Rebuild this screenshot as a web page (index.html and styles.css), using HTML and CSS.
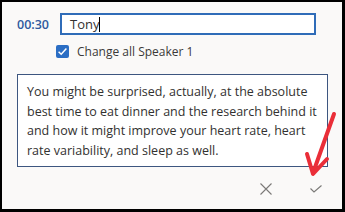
FILE: index.html
```html
<!DOCTYPE html>
<html>
<head>
<meta charset="utf-8">
<link rel="stylesheet" href="styles.css">
</head>
<body>
<div class="frame">
  <div class="row-name">
    <span class="time">00:30</span>
    <div class="name-input"><span class="name-text">Tony</span><span class="caret"></span></div>
  </div>
  <div class="row-check">
    <span class="checkbox">
      <svg width="13" height="13" viewBox="0 0 13 13"><path d="M2.6 6.8 L5.2 9.3 L10.4 3.6" fill="none" stroke="#fff" stroke-width="1.5"/></svg>
    </span>
    <span class="check-label">Change all Speaker 1</span>
  </div>
  <div class="textbox">You might be surprised, actually, at the absolute best time to eat dinner and the research behind it and how it might improve your heart rate, heart rate variability, and sleep as well.</div>
  <div class="actions">
    <svg class="icon-x" width="12" height="12" viewBox="0 0 12 12"><path d="M0.5 0.5 L11.5 11.5 M11.5 0.5 L0.5 11.5" stroke="#7a7977" stroke-width="1.1" fill="none"/></svg>
    <svg class="icon-ok" width="12" height="8" viewBox="0 0 12 8"><path d="M0.5 3.5 L4 7 L11.5 0.5" stroke="#7a7977" stroke-width="1.1" fill="none"/></svg>
  </div>
  <svg class="arrow" width="345" height="212" viewBox="0 0 345 212">
    <path d="M334 114 L313 173" stroke="#ea2e38" stroke-width="4" stroke-linecap="round" fill="none"/>
    <path d="M307 154 L313 174 L327 159" stroke="#ea2e38" stroke-width="4" stroke-linecap="round" stroke-linejoin="round" fill="none"/>
  </svg>
</div>
</body>
</html>
```
FILE: styles.css
```css
html, body {
  margin: 0;
  padding: 0;
}
.frame {
  position: relative;
  box-sizing: border-box;
  width: 345px;
  height: 212px;
  border-style: solid;
  border-color: #000;
  border-width: 2px 3px 3px 2px;
  background: #faf9f8;
  font-family: "Open Sans", "Noto Sans", sans-serif;
  color: #323130;
  padding: 11px 15px 0 15px;
  display: flex;
  flex-direction: column;
}
.row-name {
  display: flex;
  align-items: center;
  height: 22px;
}
.time {
  width: 43px;
  font-size: 12.5px;
  font-weight: 600;
  color: #2f5a9e;
}
.name-input {
  box-sizing: border-box;
  width: 256px;
  height: 22px;
  border: 2px solid #2f6cb8;
  background: #fff;
  display: flex;
  align-items: center;
  padding-left: 8px;
  font-size: 13px;
}
.caret {
  display: inline-block;
  width: 1px;
  height: 15px;
  background: #000;
}
.row-check {
  display: flex;
  align-items: center;
  margin-top: 9px;
  margin-left: 39px;
  height: 14px;
}
.checkbox {
  width: 13px;
  height: 13px;
  border-radius: 2px;
  background: #2b6ec4;
  display: flex;
}
.check-label {
  margin-left: 8px;
  font-size: 12px;
  color: #3b3a39;
}
.textbox {
  box-sizing: border-box;
  margin-top: 16px;
  width: 311px;
  height: 93px;
  border: 1px solid #3d5680;
  background: #fff;
  padding: 7px 8px 0 9px;
  font-size: 12.5px;
  line-height: 19.5px;
  color: #323130;
}
.actions {
  display: flex;
  justify-content: flex-end;
  align-items: center;
  margin-top: 16px;
  padding-right: 5px;
}
.icon-x {
  margin-right: 38px;
}
.arrow {
  position: absolute;
  left: -2px;
  top: -2px;
  pointer-events: none;
}
```
